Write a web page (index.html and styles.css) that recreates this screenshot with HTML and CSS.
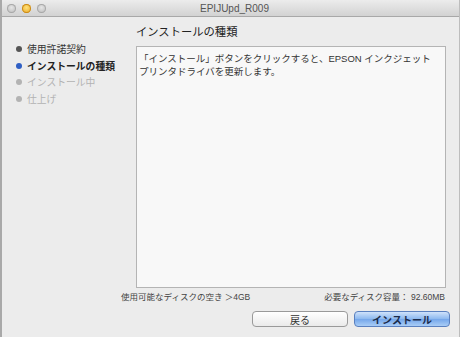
FILE: index.html
```html
<!DOCTYPE html>
<html lang="ja">
<head>
    <meta charset="UTF-8">
    <title>EPIJUpd_R009</title>
    <link rel="stylesheet" href="styles.css">
</head>
<body>
    <div class="window">
        <div class="titlebar">
            <div class="lights">
                <span class="light"></span>
                <span class="light light-min"></span>
                <span class="light"></span>
            </div>
            <div class="title">EPIJUpd_R009</div>
        </div>
        <div class="content">
            <ul class="steps">
                <li class="done">使用許諾契約</li>
                <li class="current">インストールの種類</li>
                <li class="todo">インストール中</li>
                <li class="todo">仕上げ</li>
            </ul>
            <div class="main">
                <h1>インストールの種類</h1>
                <div class="textbox">
                    <p>「インストール」ボタンをクリックすると、EPSON インクジェット<br>プリンタドライバを更新します。</p>
                </div>
            </div>
        </div>
        <div class="info">
            <span>使用可能なディスクの空き ＞4GB</span>
            <span>必要なディスク容量： 92.60MB</span>
        </div>
        <div class="buttons">
            <button class="btn">戻る</button>
            <button class="btn btn-default">インストール</button>
        </div>
    </div>
</body>
</html>
```

FILE: styles.css
```css
html, body {
    margin: 0;
    padding: 0;
}
body {
    width: 460px;
    height: 337px;
    overflow: hidden;
    font-family: "Liberation Sans", "Noto Sans CJK JP", sans-serif;
    color: #222;
    background-color: #ececec;
}
.window {
    height: 337px;
    box-sizing: border-box;
    border-left: 2px solid #a9a9a9;
    border-right: 1px solid #bdbdbd;
    background-color: #ececec;
    display: flex;
    flex-direction: column;
}
.titlebar {
    height: 17px;
    box-sizing: border-box;
    border-bottom: 1px solid #a8a8a8;
    background: linear-gradient(#ececec, #d2d2d2);
    display: flex;
    align-items: center;
}
.lights {
    display: flex;
    gap: 6px;
    padding-left: 5px;
}
.light {
    width: 9px;
    height: 9px;
    border-radius: 50%;
    background: radial-gradient(circle at 50% 40%, #e6e6e6, #b4b4b4);
    box-shadow: inset 0 0 0 1px #a8a8a8;
}
.light-min {
    background: radial-gradient(circle at 50% 40%, #ffe27a, #e9a21c);
    box-shadow: inset 0 0 0 1px #c88a1a;
}
.title {
    flex: 1;
    text-align: center;
    font-size: 10px;
    color: #555;
    padding-right: 36px;
}
.content {
    display: flex;
    height: 273px;
}
.steps {
    list-style: none;
    margin: 0;
    padding: 24px 0 0 14px;
    width: 134px;
    box-sizing: border-box;
    font-size: 9.8px;
}
.steps li {
    height: 16.5px;
    display: flex;
    align-items: center;
    gap: 5px;
    color: #333;
}
.steps li::before {
    content: "";
    width: 6px;
    height: 6px;
    border-radius: 50%;
    background-color: #555;
}
.steps .current {
    font-weight: 600;
    color: #222;
}
.steps .current::before {
    background-color: #2f5fc4;
}
.steps .todo {
    color: #b3b3b3;
}
.steps .todo::before {
    background-color: #b3b3b3;
}
.main {
    width: 310px;
    display: flex;
    flex-direction: column;
}
h1 {
    margin: 8px 0 7px 0;
    font-size: 11.3px;
    line-height: 14px;
    font-weight: normal;
    color: #222;
}
.textbox {
    height: 242px;
    box-sizing: border-box;
    border: 1px solid #b4b4b4;
    background-color: #f8f8f8;
    padding: 6px 2px;
}
.textbox p {
    margin: 0;
    font-size: 9.5px;
    line-height: 12.5px;
    color: #333;
}
.info {
    display: flex;
    justify-content: space-between;
    padding: 2px 14px 0 119px;
    font-size: 8.5px;
    line-height: 10px;
    color: #444;
}
.buttons {
    display: flex;
    justify-content: flex-end;
    gap: 6px;
    padding: 9px 9px 0 0;
}
.btn {
    width: 96px;
    height: 16px;
    padding: 0;
    font-family: inherit;
    font-size: 10px;
    color: #333;
    border: 1px solid #9a9a9a;
    border-radius: 4px;
    background: linear-gradient(#ffffff, #eaeaea);
}
.btn-default {
    font-weight: bold;
    color: #1b2b4a;
    border-color: #5a80bf;
    background: linear-gradient(#cfe2fb, #8cb8ef 50%, #74a6ea 51%, #a9cdf6);
}
```
